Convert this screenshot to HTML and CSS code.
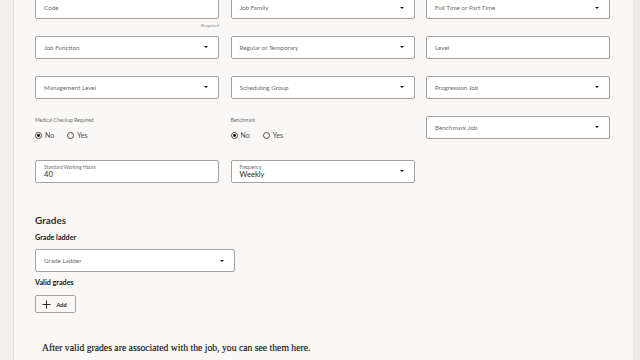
FILE: index.html
```html
<!DOCTYPE html>
<html lang="en">
<head>
    <meta charset="UTF-8">
    <meta name="viewport" content="width=device-width, initial-scale=1.0">
    <title>Edit Job</title>
    <link rel="stylesheet" href="styles.css">
</head>
<body>
    <div class="shell">
        <div class="rail"></div>
        <main class="panel">
            <div class="form">
                <div class="row row-first">
                    <div class="cell">
                        <div class="field"><span class="ph">Code</span></div>
                        <div class="help">Required</div>
                    </div>
                    <div class="cell">
                        <div class="field"><span class="ph">Job Family</span><span class="caret"></span></div>
                    </div>
                    <div class="cell">
                        <div class="field"><span class="ph">Full Time or Part Time</span><span class="caret"></span></div>
                    </div>
                </div>
                <div class="row">
                    <div class="cell">
                        <div class="field"><span class="ph">Job Function</span><span class="caret"></span></div>
                    </div>
                    <div class="cell">
                        <div class="field"><span class="ph">Regular or Temporary</span><span class="caret"></span></div>
                    </div>
                    <div class="cell">
                        <div class="field"><span class="ph">Level</span></div>
                    </div>
                </div>
                <div class="row">
                    <div class="cell">
                        <div class="field"><span class="ph">Management Level</span><span class="caret"></span></div>
                    </div>
                    <div class="cell">
                        <div class="field"><span class="ph">Scheduling Group</span><span class="caret"></span></div>
                    </div>
                    <div class="cell">
                        <div class="field"><span class="ph">Progression Job</span><span class="caret"></span></div>
                    </div>
                </div>
                <div class="row row-radio">
                    <div class="cell">
                        <div class="radio-label">Medical Checkup Required</div>
                        <div class="radio-set">
                            <span class="radio"><span class="dot checked"></span>No</span>
                            <span class="radio"><span class="dot"></span>Yes</span>
                        </div>
                    </div>
                    <div class="cell">
                        <div class="radio-label">Benchmark</div>
                        <div class="radio-set">
                            <span class="radio"><span class="dot checked"></span>No</span>
                            <span class="radio"><span class="dot"></span>Yes</span>
                        </div>
                    </div>
                    <div class="cell">
                        <div class="field"><span class="ph">Benchmark Job</span><span class="caret"></span></div>
                    </div>
                </div>
                <div class="row row-last">
                    <div class="cell">
                        <div class="field filled">
                            <div>
                                <div class="mini">Standard Working Hours</div>
                                <div class="val">40</div>
                            </div>
                        </div>
                    </div>
                    <div class="cell">
                        <div class="field filled">
                            <div>
                                <div class="mini">Frequency</div>
                                <div class="val">Weekly</div>
                            </div>
                            <span class="caret"></span>
                        </div>
                    </div>
                    <div class="cell"></div>
                </div>
            </div>

            <section class="grades">
                <h2>Grades</h2>
                <h3>Grade ladder</h3>
                <div class="field ladder"><span class="ph">Grade Ladder</span><span class="caret"></span></div>
                <h3 class="valid">Valid grades</h3>
                <button class="add-btn">
                    <svg width="9" height="9" viewBox="0 0 9 9"><path d="M4.5 0.5v8M0.5 4.5h8" stroke="#161513" stroke-width="0.9" fill="none"/></svg>
                    Add
                </button>
                <p class="empty">After valid grades are associated with the job, you can see them here.</p>
            </section>
        </main>
        <div class="edge"></div>
    </div>
</body>
</html>
```

FILE: styles.css
```css
body {
    margin: 0;
    padding: 0;
    background-color: #f1f0ee;
    font-family: Lato, "Noto Sans", sans-serif;
    color: #161513;
    overflow: hidden;
}
.shell {
    display: flex;
    height: 360px;
}
.rail {
    width: 14px;
    flex-shrink: 0;
    background-color: #f1f0ee;
}
.panel {
    width: 619px;
    flex-shrink: 0;
    background-color: #f9f8f6;
    box-shadow: -1px 0 1px rgba(0, 0, 0, 0.06);
    padding-left: 21px;
    box-sizing: border-box;
}
.edge {
    flex-grow: 1;
    background-color: #ebe9e7;
}
.form {
    margin-top: -3.5px;
}
.row {
    display: grid;
    grid-template-columns: repeat(3, 184px);
    column-gap: 11.5px;
    height: 39.5px;
}
.row + .row {
    height: 40px;
}
.row.row-radio {
    height: 44px;
}
.row.row-last {
    height: 22.5px;
}
.field {
    height: 22.5px;
    box-sizing: border-box;
    border: 1px solid #a5a29f;
    border-radius: 2px;
    background-color: #fff;
    display: flex;
    align-items: center;
    justify-content: space-between;
    padding: 0 10px 0 8px;
}
.ph {
    font-size: 6.3px;
    color: #6f6c69;
}
.caret {
    width: 0;
    height: 0;
    border-left: 2.2px solid transparent;
    border-right: 2.2px solid transparent;
    border-top: 2.4px solid #161513;
}
.help {
    text-align: right;
    font-size: 4.6px;
    color: #8c8986;
    margin-top: 3px;
}
.radio-label {
    font-size: 5px;
    color: #6f6c69;
    margin-top: 1px;
    line-height: 6px;
}
.radio-set {
    display: flex;
    gap: 13px;
    margin-top: 8px;
}
.radio {
    display: flex;
    align-items: center;
    gap: 3px;
    font-size: 7px;
    color: #4a4744;
}
.dot {
    width: 7px;
    height: 7px;
    box-sizing: border-box;
    border: 0.8px solid #4f4c49;
    border-radius: 50%;
    position: relative;
}
.dot.checked::after {
    content: "";
    position: absolute;
    left: 1.3px;
    top: 1.3px;
    width: 2.8px;
    height: 2.8px;
    border-radius: 50%;
    background-color: #161513;
}
.filled .mini {
    font-size: 4.8px;
    color: #6f6c69;
    line-height: 6px;
}
.filled .val {
    font-size: 7.6px;
    line-height: 9px;
    color: #2b2926;
}
.grades h2 {
    font-size: 10px;
    line-height: 12px;
    font-weight: 600;
    margin: 31.5px 0 0;
    color: #161513;
}
.grades h3 {
    font-size: 7.2px;
    line-height: 10px;
    font-weight: 700;
    margin: 7px 0 0;
    color: #161513;
}
.grades h3.valid {
    margin-top: 6.3px;
}
.field.ladder {
    width: 199.5px;
    margin-top: 6.3px;
}
.add-btn {
    margin-top: 6.7px;
    height: 18.6px;
    width: 40.5px;
    box-sizing: border-box;
    border: 1px solid #a5a29f;
    border-radius: 2px;
    background-color: #f9f8f6;
    display: flex;
    align-items: center;
    gap: 6px;
    padding: 0 0 0 5.5px;
    font-family: Lato, "Noto Sans", sans-serif;
    font-size: 5.6px;
    font-weight: 700;
    color: #161513;
}
.empty {
    font-family: "Liberation Serif", serif;
    font-size: 9.7px;
    line-height: 12px;
    margin: 28.7px 0 0 7px;
    color: #161513;
    -webkit-text-stroke: 0.15px #161513;
}
```
